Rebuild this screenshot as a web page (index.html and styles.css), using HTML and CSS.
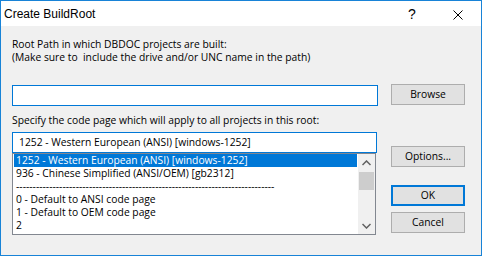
FILE: index.html
```html
<!DOCTYPE html>
<html lang="en">
<head>
  <meta charset="UTF-8">
  <title>Create BuildRoot</title>
  <link rel="stylesheet" href="styles.css">
</head>
<body>
  <div class="window">
    <div class="titlebar">
      <span class="title">Create BuildRoot</span>
      <span class="cap-btn help">?</span>
      <span class="cap-btn close">
        <svg width="10" height="10" viewBox="0 0 10 10"><path d="M0.5 0.5 L9.5 9.5 M9.5 0.5 L0.5 9.5" stroke="#000" stroke-width="1" fill="none"/></svg>
      </span>
    </div>

    <div class="client">
      <p class="label">Root Path in which DBDOC projects are built:<br>(Make sure to&nbsp; include the drive and/or UNC name in the path)</p>

      <div class="row path-row">
        <input type="text" class="edit path">
        <button class="btn">Browse</button>
      </div>

      <p class="label label-cp">Specify the code page which will apply to all projects in this root:</p>

      <div class="row cp-row">
        <div class="combo">
          <div class="combo-edit">1252 - Western European (ANSI) [windows-1252]</div>
          <div class="listbox">
            <ul class="items">
              <li class="selected">1252 - Western European (ANSI) [windows-1252]</li>
              <li>936 - Chinese Simplified (ANSI/OEM) [gb2312]</li>
              <li>------------------------------------------------------------------------------</li>
              <li>0 - Default to ANSI code page</li>
              <li>1 - Default to OEM code page</li>
              <li>2</li>
            </ul>
            <div class="vscroll">
              <div class="arrow">
                <svg width="9" height="6" viewBox="0 0 9 6"><path d="M0.5 5 L4.5 1 L8.5 5" stroke="#606060" stroke-width="1.5" fill="none"/></svg>
              </div>
              <div class="track"><div class="thumb"></div></div>
              <div class="arrow">
                <svg width="9" height="6" viewBox="0 0 9 6"><path d="M0.5 1 L4.5 5 L8.5 1" stroke="#606060" stroke-width="1.5" fill="none"/></svg>
              </div>
            </div>
          </div>
        </div>

        <div class="side-btns">
          <button class="btn options">Options...</button>
          <button class="btn ok">OK</button>
          <button class="btn cancel">Cancel</button>
        </div>
      </div>
    </div>
  </div>
</body>
</html>
```

FILE: styles.css
```css
* {
  box-sizing: border-box;
}
body {
  margin: 0;
  background: #fff;
  font-family: "Open Sans", "Liberation Sans", sans-serif;
  font-size: 10.3px;
  color: #000;
}
.window {
  width: 482px;
  height: 256px;
  border: 1px solid #1883d7;
  display: flex;
  flex-direction: column;
  background: #f0f0f0;
}
.titlebar {
  height: 25px;
  background: #fff;
  display: flex;
  align-items: center;
}
.title {
  flex: 1;
  padding-left: 3px;
  font-family: "Liberation Sans", sans-serif;
  font-size: 12px;
  padding-top: 1px;
}
.cap-btn {
  width: 46px;
  height: 25px;
  display: flex;
  align-items: center;
  justify-content: center;
}
.help {
  font-family: "Liberation Sans", sans-serif;
  font-size: 14px;
  padding-top: 1px;
}
.close {
  padding-top: 2px;
}
.client {
  flex: 1;
  padding: 12px 0 0 11px;
}
.label {
  margin: 0;
  line-height: 13px;
}
.row {
  display: flex;
  gap: 13px;
}
.path-row {
  margin-top: 20px;
}
.edit {
  width: 366px;
  height: 21px;
  margin: 1px 0 0;
  border: 1px solid #0078d7;
  background: #fff;
  padding: 0 4px;
  font: inherit;
  outline: none;
}
.btn {
  width: 74px;
  height: 21px;
  border: 1px solid #adadad;
  background: #e1e1e1;
  font: inherit;
  color: #000;
  padding: 0;
  line-height: 19px;
}
.label-cp {
  margin-top: 8px;
}
.cp-row {
  margin-top: 5px;
}
.combo {
  width: 366px;
}
.combo-edit {
  width: 365px;
  height: 21px;
  border: 1px solid #0078d7;
  background: #fff;
  padding-left: 6px;
  line-height: 19px;
  white-space: nowrap;
}
.listbox {
  width: 364px;
  height: 82px;
  border: 1px solid #828790;
  background: #fff;
  display: flex;
  overflow: hidden;
}
.items {
  flex: 1;
  list-style: none;
  margin: 0;
  padding: 0 1px;
  overflow: hidden;
}
.items li {
  height: 13px;
  line-height: 13px;
  padding-left: 2px;
  white-space: nowrap;
  overflow: hidden;
}
.items li.selected {
  background: #0078d7;
  color: #fff;
}
.vscroll {
  width: 17px;
  background: #f0f0f0;
  display: flex;
  flex-direction: column;
}
.arrow {
  height: 17px;
  display: flex;
  align-items: center;
  justify-content: center;
}
.track {
  flex: 1;
  padding-top: 1px;
}
.thumb {
  height: 18px;
  margin: 0 1px;
  background: #cdcdcd;
}
.side-btns {
  display: flex;
  flex-direction: column;
}
.options {
  margin-top: 14px;
}
.ok {
  margin-top: 18px;
  border: 2px solid #0078d7;
  line-height: 17px;
}
.cancel {
  margin-top: 6px;
}
```
